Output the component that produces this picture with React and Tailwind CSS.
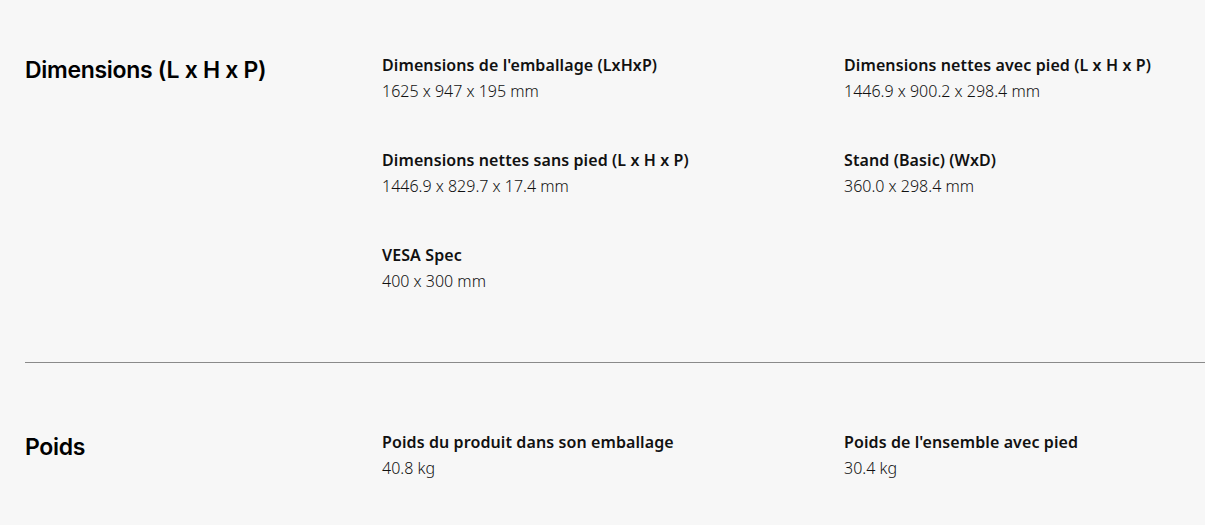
const sections = [
  {
    title: "Dimensions (L x H x P)",
    items: [
      { label: "Dimensions de l'emballage (LxHxP)", value: "1625 x 947 x 195 mm" },
      { label: "Dimensions nettes avec pied (L x H x P)", value: "1446.9 x 900.2 x 298.4 mm" },
      { label: "Dimensions nettes sans pied (L x H x P)", value: "1446.9 x 829.7 x 17.4 mm" },
      { label: "Stand (Basic) (WxD)", value: "360.0 x 298.4 mm" },
      { label: "VESA Spec", value: "400 x 300 mm" },
    ],
  },
  {
    title: "Poids",
    items: [
      { label: "Poids du produit dans son emballage", value: "40.8 kg" },
      { label: "Poids de l'ensemble avec pied", value: "30.4 kg" },
    ],
  },
];

const SpecSection = ({ title, items }) => (
  <div className="grid grid-cols-[357px_462px_1fr]">
    <h3 className="pt-[3px] text-[23px] leading-[30px] font-semibold tracking-[-0.3px] text-black [font-family:Inter,sans-serif]">
      {title}
    </h3>
    <div className="col-span-2 grid grid-cols-[462px_1fr] gap-y-[43px]">
      {items.map((item) => (
        <div key={item.label}>
          <div className="text-[16px] leading-[26px] font-semibold tracking-[0.1px] text-[#111]">
            {item.label}
          </div>
          <div className="text-[16px] leading-[26px] font-light text-[#111]">{item.value}</div>
        </div>
      ))}
    </div>
  </div>
);

const App = () => {
  return (
    <div className="min-h-[525px] bg-[#f7f7f7] pl-[25px] [font-family:'Noto_Sans',sans-serif]">
      <div className="pt-[52px] pb-[68px]">
        <SpecSection {...sections[0]} />
      </div>
      <div className="border-t border-[#8a8a8a]" />
      <div className="pt-[66px]">
        <SpecSection {...sections[1]} />
      </div>
    </div>
  );
};

export default App;
